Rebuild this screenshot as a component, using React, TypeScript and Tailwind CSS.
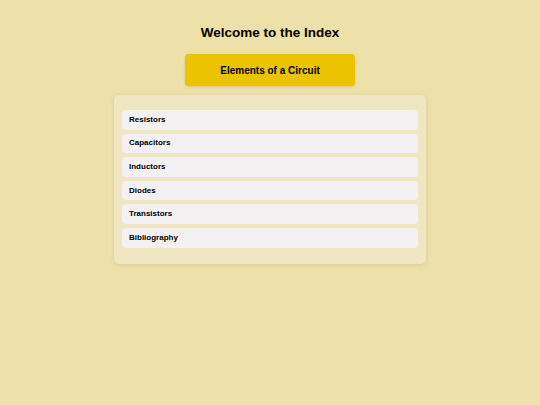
export default function App() {
  const items = ["Resistors", "Capacitors", "Inductors", "Diodes", "Transistors", "Bibliography"];
  return (
    <div className="min-h-[405px] bg-[#eee0a9] flex flex-col items-center pt-[24px]" style={{ fontFamily: '"Liberation Sans", Arial, sans-serif' }}>
      <h1 className="text-[13.5px] font-bold text-[#000] leading-[18px]">Welcome to the Index</h1>
      <div className="mt-[12px] w-[170px] h-[32px] rounded-[4px] bg-[#ebc300] shadow-[0_1px_3px_rgba(0,0,0,0.12)] flex items-center justify-center text-[10px] font-bold text-[#000]">
        Elements of a Circuit
      </div>
      <div className="mt-[9px] w-[312px] rounded-[5px] bg-[#f1e6c2] shadow-[0_1px_4px_rgba(0,0,0,0.1)] px-[8px] pt-[15px] pb-[16px] flex flex-col gap-[4px]">
        {items.map((t) => (
          <div key={t} className="h-[19.6px] rounded-[4px] bg-[#f3f1f1] flex items-center pl-[7px] text-[8px] font-bold text-[#000]">
            {t}
          </div>
        ))}
      </div>
    </div>
  );
}
